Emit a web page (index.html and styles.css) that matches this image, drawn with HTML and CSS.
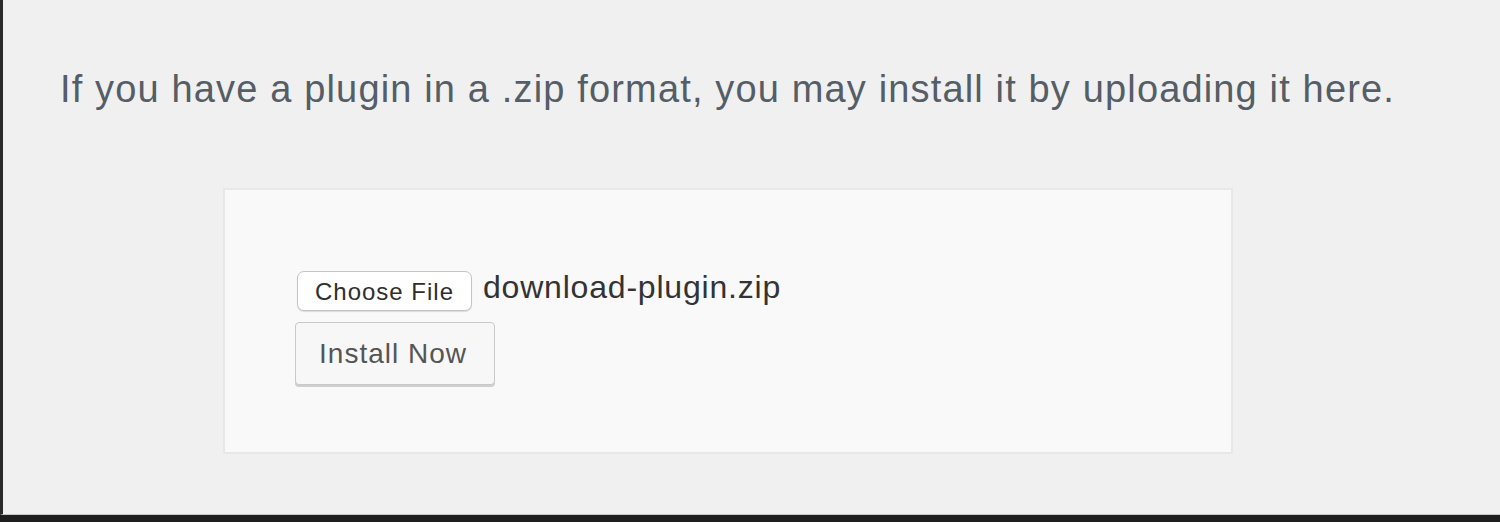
FILE: index.html
```html
<!DOCTYPE html>
<html>
<head>
<meta charset="utf-8">
<link rel="stylesheet" href="styles.css">
</head>
<body>
<div class="screen">
  <div class="page">
    <p class="intro">If you have a plugin in a .zip format, you may install it by uploading it here.</p>
    <form class="upload-box">
      <div class="file-row">
        <button type="button" class="choose-btn">Choose File</button>
        <span class="file-name">download-plugin.zip</span>
      </div>
      <button type="button" class="install-btn">Install Now</button>
    </form>
  </div>
  <div class="bottom-bar"></div>
</div>
</body>
</html>
```
FILE: styles.css
```css
html, body {
  margin: 0;
  padding: 0;
  width: 1500px;
  height: 522px;
  overflow: hidden;
  background: #f0f0f0;
  font-family: "Liberation Sans", Arial, sans-serif;
}
.screen {
  display: flex;
  flex-direction: column;
  height: 522px;
}
.page {
  flex: 1;
  background: #f0f0f0;
  border-left: 3px solid #2a2a2a;
  border-bottom: 1px solid #c9c9c9;
  padding-left: 57px;
  padding-top: 64px;
  box-sizing: border-box;
}
.bottom-bar {
  height: 7px;
  background: #1e1e1e;
}
.intro {
  margin: 0;
  font-size: 38px;
  line-height: 50px;
  color: #555d66;
  letter-spacing: 1.15px;
  white-space: nowrap;
}
.upload-box {
  margin: 74px 0 0 163px;
  width: 1010px;
  height: 266px;
  box-sizing: border-box;
  background: #f9f9f9;
  border: 2px solid #e8e8e8;
  padding: 81px 0 0 70px;
  display: flex;
  flex-direction: column;
  align-items: flex-start;
  gap: 11px;
}
.file-row {
  display: flex;
  align-items: center;
  gap: 11px;
  margin-left: 2px;
}
.choose-btn {
  width: 175px;
  height: 40px;
  background: #ffffff;
  border: 1px solid #c4c4c4;
  border-radius: 7px;
  box-shadow: 0 1px 1px rgba(0,0,0,0.12);
  font-family: "Liberation Sans", Arial, sans-serif;
  font-size: 24px;
  letter-spacing: 1px;
  color: #2e2e2e;
  padding: 2px 0 0;
}
.file-name {
  font-size: 32px;
  letter-spacing: 0.8px;
  color: #333;
  margin-top: -7px;
}
.install-btn {
  width: 200px;
  height: 63px;
  background: #f7f7f7;
  border: 1px solid #c9c9c9;
  border-radius: 4px;
  box-shadow: 0 2px 0 #cfcfcf;
  font-family: "Liberation Sans", Arial, sans-serif;
  font-size: 28px;
  letter-spacing: 1px;
  color: #555;
  padding: 0 4px 0 0;
}
```
